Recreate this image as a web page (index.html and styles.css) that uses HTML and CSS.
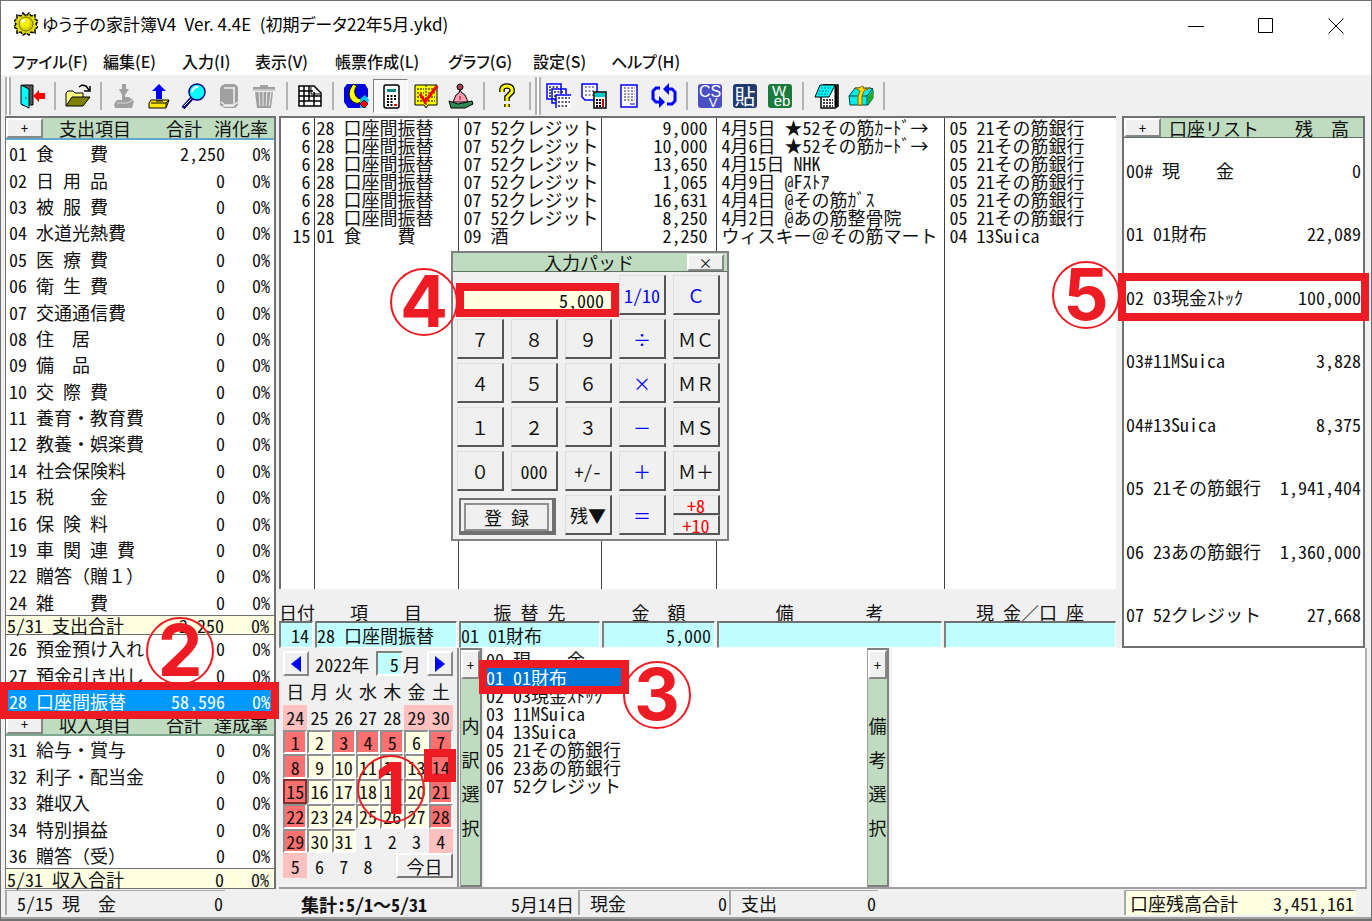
FILE: index.html
```html
<!DOCTYPE html>
<html lang="ja">
<head>
<meta charset="utf-8">
<title>ゆう子の家計簿V4</title>
<link rel="stylesheet" href="styles.css">
</head>
<body>
<div class="window">
  <header class="titlebar">
    <svg class="app-icon" width="24" height="24" viewBox="0 0 24 24" aria-hidden="true">
      <path d="M9 1l3 3 3-3 2 3 4-1v4l3 2-2 3 2 3-3 2v4l-4-1-2 3-3-2-3 2-2-3-4 1v-4l-3-2 2-3-2-3 3-2V3l4 1z" fill="#e8e000" stroke="#000" stroke-width="1.500" stroke-dasharray="4 1"/>
      <circle cx="12" cy="12" r="7" fill="#d8d000" stroke="#6b6500"/>
      <circle cx="11" cy="11" r="5" fill="#f6f000"/><circle cx="9" cy="9" r="2" fill="#fffff0"/>
    </svg>
    <h1 class="title">ゆう子の家計簿V4&ensp;Ver. 4.4E&ensp;(初期データ22年5月.ykd)</h1>
    <div class="win-controls">
      <button aria-label="最小化"><svg width="16" height="16" viewBox="0 0 16 16"><path d="M0 8.5h16" stroke="#000" fill="none"/></svg></button>
      <button aria-label="最大化"><svg width="16" height="16" viewBox="0 0 16 16"><path d="M.5 .5h14v14h-14z" stroke="#000" fill="none"/></svg></button>
      <button aria-label="閉じる"><svg width="16" height="16" viewBox="0 0 16 16"><path d="M.5 .5l15 15M15.500 .5l-15 15" stroke="#000" fill="none"/></svg></button>
    </div>
  </header>
  <nav class="menubar">
    <button>ファイル(F)</button><button>編集(E)</button><button>入力(I)</button><button>表示(V)</button><button>帳票作成(L)</button><button>グラフ(G)</button><button>設定(S)</button><button>ヘルプ(H)</button>
  </nav>
  <div class="toolbar">
    <span class="grip"></span>
    <button aria-label="終了"><svg viewBox="0 0 26 26"><path d="M3 2h11v20H3z" fill="#555" stroke="#000"/><path d="M2 2l8 4v19l-8-4z" fill="#0ff" stroke="#000"/><path d="M7 14v2" stroke="#000"/><path d="M14 13l6-6v3h6v6h-6v3z" fill="#f00"/></svg></button>
    <span class="sep"></span>
    <button aria-label="開く"><svg viewBox="0 0 26 26"><path d="M1 23V10l2-2h5l2 2h8v5" fill="#ffff80" stroke="#000"/><path d="M1 23l6-9h18l-7 9z" fill="#808000" stroke="#000"/><path d="M14 4l3-2 4 1 3 4M25 3v5h-6" fill="none" stroke="#000" stroke-width="1.500"/></svg></button>
    <span class="sep"></span>
    <button aria-label="保存"><svg viewBox="0 0 26 26"><path d="M11 1h4v5h3l-4 6v2h4l5 4-2 7H4l-1-4 3-4h5v-5L8 6h3z" fill="#a0a0a0"/><path d="M6 20h10l6-3" stroke="#d8d8d8" fill="none"/></svg></button>
    <button aria-label="書き出し"><svg viewBox="0 0 26 26"><path d="M13 1l7 7h-4v8h-6V8H6z" fill="#00f"/><path d="M5 17h18l-3 8H3v-5z" fill="#ffe600" stroke="#000"/><path d="M5 20h15l3-3M20 20v4M10 18h7" fill="none" stroke="#000"/></svg></button>
    <button aria-label="検索"><svg viewBox="0 0 26 26"><path d="M2 25l9-10" stroke="#000080" stroke-width="4"/><path d="M3 23l8-8" stroke="#fff"/><circle cx="16" cy="9" r="8" fill="#0ff" stroke="#000080" stroke-width="1.500"/><path d="M11 9q1-5 6-5" stroke="#fff" stroke-width="2" fill="none"/></svg></button>
    <button aria-label="帳簿"><svg viewBox="0 0 26 26"><path d="M5 3l4-2h10l3 3v18l-3 3H8l-4-3V6z" fill="#a0a0a0"/><path d="M5 19l4 3h9l4-3M18 5v16M8 5h11M7 23h11" fill="none" stroke="#eee" stroke-width="1.500"/></svg></button>
    <button aria-label="削除"><svg viewBox="0 0 26 26"><path d="M2 4h7V2h8v2h7v4H2zM4 9h18l-2 16H6z" fill="#a0a0a0"/><path d="M8 9l1 14M12 9v14M16 9l-1 14M20 9l-2 14M2 7h22" stroke="#eee" fill="none"/></svg></button>
    <span class="sep"></span>
    <button aria-label="一覧表"><svg viewBox="0 0 26 26"><path d="M2 3h15l7 7v13H2zM2 8h14M2 13h22M2 18h22M7 3v20M12 3v15M17 9v14" fill="#fff" stroke="#000" stroke-width="1.500"/><path d="M14 4v7h9" fill="none" stroke="#000"/></svg></button>
    <span class="sep"></span>
    <button aria-label="夜間"><svg viewBox="0 0 26 26"><path d="M4 1h18l3 5v8l-6 3 3 8H5l-4-6V5z" fill="#0000e0"/><path d="M10 1q-8 11 0 18 4 3 8 0l2-4q-5 2-7-2-3-6 1-10z" fill="#ff0" stroke="#000"/><path d="M17 16l5-4 4 5-3 8h-6z" fill="#00bfff"/><path d="M21 17l4 4-4 4-4-4z" fill="#f00" stroke="#600"/></svg></button>
    <button class="pressed" aria-label="入力パッド"><svg viewBox="0 0 26 26"><rect x="6" y="2" width="15" height="23" rx="2" fill="#fff" stroke="#000" stroke-width="1.500"/><path d="M9 6h9v3H9z" fill="#088"/><path d="M9 13h9M9 16h9M9 19h6M9 22h6" stroke="#000" stroke-width="2" stroke-dasharray="2 1.500"/><path d="M16 21h3v2h-3z" fill="#f00"/></svg></button>
    <button aria-label="チェック"><svg viewBox="0 0 26 26"><path d="M2 2h22v20h-9l-2 3-2-3H2z" fill="#ff0" stroke="#000"/><path d="M13 2v20M4 6h7M4 10h7M4 14h7M4 18h7M15 6h7M15 10h7M15 14h7M15 18h7" stroke="#000" stroke-dasharray="2 1"/><path d="M7 11l5 8L24 3" fill="none" stroke="#f00" stroke-width="3"/></svg></button>
    <button aria-label="人物"><svg viewBox="0 0 26 26"><circle cx="12" cy="4" r="3" fill="#b04050" stroke="#000"/><path d="M12 7l2 3 3 2 3 7H5l3-7 3-2z" fill="#ff9db5" stroke="#000"/><path d="M1 18l9 3 14-3 1 3-8 4H3z" fill="#2e8b57" stroke="#000"/><path d="M12 13v4" stroke="#a00"/></svg></button>
    <span class="sep"></span>
    <button aria-label="ヘルプ"><svg viewBox="0 0 26 26"><path d="M8 9V6q1-3 5-3t5 3v3l-5 5v4M13 21v3" fill="none" stroke="#000" stroke-width="5.500"/><path d="M8 9V6q1-3 5-3t5 3v3l-5 5v4M13 21v3" fill="none" stroke="#ff0" stroke-width="3"/></svg></button>
    <span class="sep"></span>
    <span class="grip"></span>
    <button aria-label="複数一覧"><svg viewBox="0 0 26 26"><g fill="#fff" stroke="#00f" stroke-width="1.500"><path d="M1 1h14v15H1zM6 6h14v14H6z"/><path d="M10 11h15v14H10z" stroke="none"/><path d="M25 12H10v13"/></g><path d="M3 4h10M3 7h2M3 10h2M3 13h2M8 9h10M8 13h2M8 17h2M12 15h12M12 19h12M12 23h10" stroke="#224" stroke-width="1.500" stroke-dasharray="2 1.500"/></svg></button>
    <button aria-label="一覧と計算"><svg viewBox="0 0 26 26"><path d="M1 1h15v16H4l-3-3z" fill="#fff" stroke="#00f" stroke-width="1.500"/><path d="M4 4h10M4 8h10M4 12h10" stroke="#224" stroke-dasharray="2 1.500"/><path d="M13 9h12v16H13z" fill="#fff" stroke="#000" stroke-width="1.500"/><path d="M14 10h10v4H14z" fill="#0cc"/><path d="M15 17h6M15 20h6M15 23h6" stroke="#000" stroke-width="2" stroke-dasharray="2 1"/><path d="M22 16v8" stroke="#c00" stroke-width="2"/></svg></button>
    <button aria-label="一覧"><svg viewBox="0 0 26 26"><path d="M5 2h16v22H5z" fill="#fff" stroke="#00f" stroke-width="1.500"/><path d="M8 5h11M8 8h11M8 11h11M8 14h11M8 17h11" stroke="#224" stroke-dasharray="2 1.500"/><path d="M14 21h5" stroke="#00f"/></svg></button>
    <button aria-label="更新"><svg viewBox="0 0 26 26"><path d="M9 5H5L2 8v8l3 3h5M16 21h5l3-3V9l-3-3h-5" fill="none" stroke="#00f" stroke-width="3"/><path d="M8 13l6 6-6 6zM18 0l-6 6 6 6z" fill="#00f"/></svg></button>
    <span class="sep"></span>
    <button aria-label="CSV"><svg viewBox="0 0 26 26"><rect x="1" y="1" width="24" height="24" rx="3" fill="#4a4fc4"/><text class="icon-text" x="13" y="14" font-size="16">CS</text><text class="icon-text" x="16" y="24" font-size="13">V</text></svg></button>
    <button aria-label="貼り付け"><svg viewBox="0 0 26 26"><rect x="1" y="1" width="24" height="24" rx="3" fill="#1f3a6e"/><text class="icon-text" x="13" y="21" font-size="21">貼</text></svg></button>
    <button aria-label="Web"><svg viewBox="0 0 26 26"><rect x="1" y="1" width="24" height="24" rx="3" fill="#197a3c"/><text class="icon-text" x="12" y="13" font-size="15">W</text><text class="icon-text" x="15" y="23" font-size="15">eb</text></svg></button>
    <span class="sep"></span>
    <button aria-label="メモ帳"><svg viewBox="0 0 26 26"><path d="M10 2h15v21l-3 2H8V12" fill="#fff" stroke="#000" stroke-width="1.500"/><path d="M23 3v21" stroke="#000" stroke-width="3"/><path d="M7 2h15l-6 12H2z" fill="#0ff" stroke="#000"/><path d="M8 5h10M6 8h10M5 11h10" stroke="#066" stroke-dasharray="2 1"/><path d="M10 17h10M10 20h10M10 23h10" stroke="#000" stroke-width="1.500" stroke-dasharray="2 1"/></svg></button>
    <button aria-label="札束"><svg viewBox="0 0 26 26"><path d="M1 13l6-8h16l2 2v8l-5 7H2z" fill="#0ee" stroke="#044"/><path d="M1 13h18l6-8M19 13v9" fill="none" stroke="#044"/><path d="M7 5h4l4-2 1 3 6-1-6 3-2 5v9h-4v-9l2-5z" fill="#fd0" stroke="#860"/><path d="M20 13l5-6v8l-5 7z" fill="#2a2"/></svg></button>
    <span class="sep"></span>
  </div>

  <main class="workspace">
    <table class="items">
      <thead><tr class="head"><th><button class="plus">+</button><span>支出項目</span></th><th>合計</th><th>消化率</th></tr></thead>
      <tbody>
        <tr><td>01 食　　費</td><td>2,250</td><td>0%</td></tr>
        <tr><td>02 日 用 品</td><td>0</td><td>0%</td></tr>
        <tr><td>03 被 服 費</td><td>0</td><td>0%</td></tr>
        <tr><td>04 水道光熱費</td><td>0</td><td>0%</td></tr>
        <tr><td>05 医 療 費</td><td>0</td><td>0%</td></tr>
        <tr><td>06 衛 生 費</td><td>0</td><td>0%</td></tr>
        <tr><td>07 交通通信費</td><td>0</td><td>0%</td></tr>
        <tr><td>08 住　居</td><td>0</td><td>0%</td></tr>
        <tr><td>09 備　品</td><td>0</td><td>0%</td></tr>
        <tr><td>10 交 際 費</td><td>0</td><td>0%</td></tr>
        <tr><td>11 養育・教育費</td><td>0</td><td>0%</td></tr>
        <tr><td>12 教養・娯楽費</td><td>0</td><td>0%</td></tr>
        <tr><td>14 社会保険料</td><td>0</td><td>0%</td></tr>
        <tr><td>15 税　　金</td><td>0</td><td>0%</td></tr>
        <tr><td>16 保 険 料</td><td>0</td><td>0%</td></tr>
        <tr><td>19 車 関 連 費</td><td>0</td><td>0%</td></tr>
        <tr><td>22 贈答（贈１）</td><td>0</td><td>0%</td></tr>
        <tr><td>24 雑　　費</td><td>0</td><td>0%</td></tr>
        <tr class="total"><td>5/31 支出合計</td><td>2,250</td><td>0%</td></tr>
        <tr><td>26 預金預け入れ</td><td>0</td><td>0%</td></tr>
        <tr><td>27 預金引き出し</td><td>0</td><td>0%</td></tr>
        <tr class="selected"><td>28 口座間振替</td><td>58,596</td><td>0%<span class="mark mark-item"><span class="num">2</span></span></td></tr>
      </tbody>
      <tbody>
        <tr class="head"><th><button class="plus">+</button><span>収入項目</span></th><th>合計</th><th>達成率</th></tr>
        <tr><td>31 給与・賞与</td><td>0</td><td>0%</td></tr>
        <tr><td>32 利子・配当金</td><td>0</td><td>0%</td></tr>
        <tr><td>33 雑収入</td><td>0</td><td>0%</td></tr>
        <tr><td>34 特別損益</td><td>0</td><td>0%</td></tr>
        <tr><td>36 贈答（受）</td><td>0</td><td>0%</td></tr>
        <tr class="total"><td>5/31 収入合計</td><td>0</td><td>0%</td></tr>
      </tbody>
    </table>

    <div class="right">
      <div class="upper">
        <section class="book">
          <div class="ledger-wrap">
            <table class="ledger">
              <colgroup><col class="c-day"><col class="c-item"><col class="c-dest"><col class="c-amount"><col><col class="c-account"></colgroup>
              <tbody>
                <tr><td>6</td><td>28 口座間振替</td><td>07 52クレジット</td><td>9,000</td><td>4月5日 ★52その筋ｶｰﾄﾞ→</td><td>05 21その筋銀行</td></tr>
                <tr><td>6</td><td>28 口座間振替</td><td>07 52クレジット</td><td>10,000</td><td>4月6日 ★52その筋ｶｰﾄﾞ→</td><td>05 21その筋銀行</td></tr>
                <tr><td>6</td><td>28 口座間振替</td><td>07 52クレジット</td><td>13,650</td><td>4月15日 NHK</td><td>05 21その筋銀行</td></tr>
                <tr><td>6</td><td>28 口座間振替</td><td>07 52クレジット</td><td>1,065</td><td>4月9日 @Fｽﾄｱ</td><td>05 21その筋銀行</td></tr>
                <tr><td>6</td><td>28 口座間振替</td><td>07 52クレジット</td><td>16,631</td><td>4月4日 @その筋ｶﾞｽ</td><td>05 21その筋銀行</td></tr>
                <tr><td>6</td><td>28 口座間振替</td><td>07 52クレジット</td><td>8,250</td><td>4月2日 @あの筋整骨院</td><td>05 21その筋銀行</td></tr>
                <tr><td>15</td><td>01 食　　費</td><td>09 酒</td><td>2,250</td><td>ウィスキー＠その筋マート</td><td>04 13Suica</td></tr>
                <tr class="filler"><td></td><td></td><td></td><td></td><td></td><td></td></tr>
              </tbody>
            </table>
            <section class="pad" aria-label="入力パッド">
              <div class="pad-head"><span>入力パッド</span><button aria-label="閉じる">×</button></div>
              <div class="keys">
                <div class="display"><input aria-label="金額" value="5,000"><span class="mark mark-display"><span class="num">4</span></span></div>
                <button class="blue">1/10</button><button class="blue">Ｃ</button>
                <button>７</button><button>８</button><button>９</button><button class="blue">÷</button><button>ＭＣ</button>
                <button>４</button><button>５</button><button>６</button><button class="blue">×</button><button>ＭＲ</button>
                <button>１</button><button>２</button><button>３</button><button class="blue">－</button><button>ＭＳ</button>
                <button>０</button><button>000</button><button>+/-</button><button class="blue">＋</button><button>Ｍ＋</button>
                <button class="enter"><span>登 録</span></button><button>残▼</button><button class="blue">＝</button>
                <div class="plus-keys"><button>+8</button><button>+10</button></div>
              </div>
            </section>
          </div>
          <form class="entry">
            <label><span>日付</span><input class="num-in" value="14"></label>
            <label><span>項　　目</span><input value="28 口座間振替"></label>
            <label><span>振 替 先</span><input value="01 01財布"></label>
            <label><span>金　額</span><input class="num-in" value="5,000"></label>
            <label><span>備　　　　考</span><input value=""></label>
            <label><span>現 金／口 座</span><input value=""></label>
          </form>
        </section>
        <table class="accounts">
          <thead><tr class="head"><th><button class="plus">+</button><span>口座リスト</span></th><th>残　高</th></tr></thead>
          <tbody>
            <tr><td>00# 現　　金</td><td>0</td></tr>
            <tr><td>01 01財布</td><td>22,089</td></tr>
            <tr><td>02 03現金ｽﾄｯｸ</td><td>100,000<span class="mark mark-account"><span class="num">5</span></span></td></tr>
            <tr><td>03#11MSuica</td><td>3,828</td></tr>
            <tr><td>04#13Suica</td><td>8,375</td></tr>
            <tr><td>05 21その筋銀行</td><td>1,941,404</td></tr>
            <tr><td>06 23あの筋銀行</td><td>1,360,000</td></tr>
            <tr><td>07 52クレジット</td><td>27,668</td></tr>
          </tbody>
        </table>
      </div>

      <div class="lower">
        <section class="calendar">
          <div class="month">
            <button aria-label="前月"><svg width="10" height="16" viewBox="0 0 10 16"><path d="M10 0v16L0 8z" fill="#00f"/></svg></button>
            <span class="year">2022年</span>
            <label><input value="5">月</label>
            <button aria-label="翌月"><svg width="10" height="16" viewBox="0 0 10 16"><path d="M0 0v16l10-8z" fill="#00f"/></svg></button>
          </div>
          <div class="weekdays"><span>日</span><span>月</span><span>火</span><span>水</span><span>木</span><span>金</span><span>土</span></div>
          <div class="days">
            <button class="off">24</button><button>25</button><button>26</button><button>27</button><button>28</button><button class="off">29</button><button class="off">30</button>
            <button class="hol">1</button><button class="day">2</button><button class="hol">3</button><button class="hol">4</button><button class="hol">5</button><button class="day">6</button><button class="hol">7</button>
            <button class="hol">8</button><button class="day">9</button><button class="day">10</button><button class="day">11</button><button class="day">12</button><button class="day">13</button><button class="hol">14<span class="mark mark-day"><span class="num">1</span></span></button>
            <button class="hol today">15</button><button class="day">16</button><button class="day">17</button><button class="day">18</button><button class="day">19</button><button class="day">20</button><button class="hol">21</button>
            <button class="hol">22</button><button class="day">23</button><button class="day">24</button><button class="day">25</button><button class="day">26</button><button class="day">27</button><button class="hol">28</button>
            <button class="hol">29</button><button class="day">30</button><button class="day">31</button><button>1</button><button>2</button><button>3</button><button class="off">4</button>
            <button class="off">5</button><button>6</button><button>7</button><button>8</button><button class="go-today">今日</button>
          </div>
        </section>
        <div class="side"><button class="plus">+</button><span>内</span><span>訳</span><span>選</span><span>択</span></div>
        <ul class="choices" role="listbox" aria-label="内訳選択">
          <li role="option">00 現　　金</li>
          <li role="option" aria-selected="true">01 01財布<span class="mark mark-choice"><span class="num">3</span></span></li>
          <li role="option">02 03現金ｽﾄｯｸ</li>
          <li role="option">03 11MSuica</li>
          <li role="option">04 13Suica</li>
          <li role="option">05 21その筋銀行</li>
          <li role="option">06 23あの筋銀行</li>
          <li role="option">07 52クレジット</li>
        </ul>
        <div class="side"><button class="plus">+</button><span>備</span><span>考</span><span>選</span><span>択</span></div>
        <div class="notes"></div>
      </div>
    </div>
  </main>

  <footer class="status">
    <div class="cell"><span>5/15 現　金</span><span>0</span></div>
    <div class="period"><b>集計:5/1～5/31</b><strong>5月14日</strong></div>
    <div class="cell"><span>現金</span><span>0</span></div>
    <div class="cell"><span>支出</span><span>0</span></div>
    <div class="cell sum"><span>口座残高合計</span><span>3,451,161</span></div>
  </footer>
</div>
</body>
</html>
```

FILE: styles.css
```css
* { box-sizing: border-box; }
body {
  margin: 0;
  color: #111;
  background: #f0f0f0;
  font: 18px/18px "Noto Sans Mono CJK JP", "Noto Sans CJK JP", monospace;
}
button, input {
  font: inherit;
  color: inherit;
  margin: 0;
  padding: 0;
  border: 0;
  border-radius: 0;
  background: none;
  min-width: 0;
}
.window {
  min-height: 100vh;
  display: flex;
  flex-direction: column;
  border: 1px solid #707070;
  border-bottom-width: 2px;
}

/* title and menus */
.titlebar {
  display: flex;
  align-items: center;
  height: 46px;
  padding-left: 13px;
  background: #fff;
}
.title {
  flex: 1;
  margin: 0 0 0 4px;
  font: 17px/24px "Noto Sans CJK JP", sans-serif;
  font-feature-settings: "palt";
  color: #000;
  white-space: pre;
}
.win-controls { display: flex; }
.win-controls button { width: 70px; height: 46px; }
.win-controls svg { vertical-align: middle; }
.menubar {
  display: grid;
  grid-template-columns: 91px 79px 73px 80px 113px 85px 78px 80px;
  height: 28px;
  padding-left: 11px;
  background: #fff;
}
.menubar button {
  text-align: left;
  font: 500 16px/28px "Noto Sans CJK JP", sans-serif;
  font-feature-settings: "palt";
  white-space: nowrap;
}
.toolbar {
  display: flex;
  align-items: center;
  height: 41px;
  padding-left: 4px;
}
.toolbar button {
  width: 35px;
  height: 34px;
  flex: none;
  display: grid;
  place-items: center;
}
.toolbar svg { width: 26px; height: 26px; overflow: visible; }
.toolbar .pressed {
  border: 1px solid #fff;
  border-top-color: #808080;
  border-left-color: #808080;
  background: #f8f8f8;
}
.sep { width: 11px; height: 28px; flex: none; }
.sep::before { content: ""; display: block; width: 2px; height: 100%; margin: auto; background: #b4b4b4; }
.grip {
  width: 6px;
  height: 38px;
  margin-right: 3px;
  border: solid #b0b0b0;
  border-width: 0 2px;
  background: #fff;
}
.sep + .grip { margin-right: 0; }
.icon-text { fill: #fff; text-anchor: middle; font-family: "Liberation Sans", "Noto Sans CJK JP", sans-serif; }

/* shared pieces */
.workspace { flex: 1; display: flex; gap: 3px; padding: 0 4px; }
table { border-collapse: collapse; border-spacing: 0; }
td, th { padding: 0; font-weight: 400; white-space: pre; }
.plus {
  background: #f0f0f0;
  border: 2px solid #fff;
  border-right-color: #888;
  border-bottom-color: #888;
  text-align: center;
  font-size: 14px;
}
.head { background: #c0dcc0; }

/* item list */
.items {
  width: 271px;
  flex: none;
  display: flex;
  flex-direction: column;
  border: 2px solid #707070;
  border-width: 2px 2px 1px 1px;
  background: #fff;
}
.items thead, .items tbody { display: contents; }
.items tr {
  flex: 1 1 26px;
  display: grid;
  grid-template-columns: 1fr 70px 45px;
  align-items: center;
  padding: 0 4px 0 3px;
  position: relative;
}
.items td + td, .items th + th { text-align: right; }
.items .head {
  flex: 0 0 22px;
  padding: 0 6px 0 0;
  grid-template-columns: 1fr 60px 66px;
  border-bottom: 2px solid #80a890;
}
.items thead .head { border-bottom-color: #60a8c8; }
.items .head th:first-child, .accounts .head th:first-child {
  display: flex;
  align-items: center;
  text-align: left;
}
.items .plus { width: 37px; height: 20px; line-height: 14px; margin-right: 16px; }
.items .total {
  flex: 0 0 20px;
  padding: 0 5px 0 1px;
  background: #ffffe1;
  border: 1px solid #707070;
  border-width: 1px 0;
}
.items .total:last-child { border-bottom: 0; }
.items .selected { background: #0099ff; color: #fff; }

/* ledger */
.right { flex: 1; min-width: 0; display: flex; flex-direction: column; }
.upper { flex: 1; display: flex; gap: 6px; padding-right: 2px; }
.book { flex: 1; min-width: 0; display: flex; flex-direction: column; }
.ledger-wrap {
  flex: 1;
  display: flex;
  position: relative;
  background: #fff;
  border-top: 2px solid #707070;
  border-left: 2px solid #707070;
}
.ledger { width: 100%; table-layout: fixed; }
.c-day { width: 33px; }
.c-item { width: 144px; }
.c-dest { width: 143px; }
.c-amount { width: 115px; }
.c-account { width: 172px; }
.ledger td { height: 18px; padding: 0 5px; border-left: 1px solid #404040; }
.ledger td:first-child { border-left: 0; padding: 0 3px 0 0; text-align: right; }
.ledger td:nth-child(2) { padding: 0 2px; }
.ledger td:nth-child(4) { padding-right: 8px; text-align: right; }
.ledger .filler td { height: auto; }
.entry {
  display: grid;
  grid-template-columns: 34px 142px 141px 113px 1fr 172px;
  gap: 2px;
  padding-top: 14px;
}
.entry label { display: flex; flex-direction: column; min-width: 0; text-align: center; white-space: pre; }
.entry span { height: 18px; }
.entry input {
  width: 100%;
  height: 27px;
  padding: 0;
  line-height: 24px;
  background: #c0ffff;
  border: 1px solid #fff;
  border-top: 2px solid #707070;
  border-left: 2px solid #808080;
}
.entry .num-in { padding-right: 3px; text-align: right; }

/* input pad */
.pad {
  position: absolute;
  left: 170px;
  top: 133px;
  width: 278px;
  border: 2px solid #808080;
  background: #f0f0f0;
}
.pad-head {
  display: flex;
  justify-content: flex-end;
  align-items: center;
  height: 19px;
  background: #c0dcc0;
  border-bottom: 1px solid #607060;
}
.pad-head span { flex: 1; padding-left: 38px; text-align: center; }
.pad-head button {
  width: 37px;
  height: 17px;
  margin-right: 3px;
  font-size: 14px;
  line-height: 12px;
  background: #f0f0f0;
  border: 2px solid #fff;
  border-right-color: #888;
  border-bottom-color: #888;
}
.keys {
  display: grid;
  grid-template-columns: repeat(5, 47px);
  grid-auto-rows: 40px;
  gap: 4px 7px;
  padding: 3px 4px 4px;
}
.keys button {
  background: #f0f0f0;
  border: 1px solid #ddd;
  border-right: 2px solid #555;
  border-bottom: 2px solid #555;
  white-space: pre;
}
.keys .blue { color: #0000ff; }
.display { grid-column: span 3; position: relative; align-self: end; margin-bottom: 4px; }
.display input { width: 100%; height: 22px; padding-right: 8px; line-height: 22px; background: #ffffe1; text-align: right; display: block; }
.keys .enter { grid-column: span 2; margin: 3px 2px 0; padding: 3px; border: 2px solid #707070; border-right-width: 4px; border-bottom-width: 4px; }
.enter span { display: block; line-height: 24px; border: 2px solid #909090; }
.plus-keys { display: grid; grid-template-rows: 1fr 1fr; }
.plus-keys button { color: #f00; line-height: 16px; }

/* accounts */
.accounts {
  width: 243px;
  flex: none;
  display: flex;
  flex-direction: column;
  border: 2px solid #707070;
  background: #fff;
}
.accounts thead, .accounts tbody { display: contents; }
.accounts tr {
  flex: 1 1 60px;
  display: grid;
  grid-template-columns: 1fr auto;
  align-items: center;
  padding: 0 2px;
  position: relative;
}
.accounts .head { flex: 0 0 20px; padding: 0 14px 0 0; border-bottom: 1px solid #607060; }
.accounts .plus { width: 37px; height: 19px; line-height: 14px; margin-right: 8px; }

/* lower area */
.lower { display: flex; height: 241px; border-bottom: 2px solid #a0a0a0; }
.calendar {
  width: 180px;
  flex: none;
  display: flex;
  flex-direction: column;
  padding: 3px 4px 9px;
  border-right: 2px solid #909090;
}
.month { display: flex; align-items: center; justify-content: space-between; height: 25px; }
.month button {
  width: 26px;
  height: 25px;
  display: grid;
  place-items: center;
  background: #f0f0f0;
  border: 2px solid #fff;
  border-right-color: #888;
  border-bottom-color: #888;
}
.month label { display: flex; align-items: center; }
.month input {
  width: 27px;
  height: 25px;
  padding-right: 2px;
  text-align: right;
  background: #c0ffff;
  border: 2px solid #808080;
  border-right-color: #fff;
  border-bottom-color: #fff;
}
.weekdays, .days { display: grid; grid-template-columns: repeat(7, 1fr); text-align: center; }
.weekdays { padding: 6px 0 5px; }
.days { flex: 1; grid-auto-rows: 1fr; font-weight: 500; }
.days button { border: 1px solid transparent; position: relative; }
.days .off { background: #ffc0c0; }
.days .hol, .days .day { border: 2px solid #909090; border-right-color: #fff; border-bottom-color: #fff; }
.days .hol { background: #ff7070; }
.days .day { background: #ffffe1; }
.days .today { border-color: #803030; }
.days .go-today {
  grid-column: span 3;
  margin-left: 16px;
  background: #f0f0f0;
  border: 2px solid #fff;
  border-right-color: #777;
  border-bottom-color: #777;
  font-weight: 400;
}
.side {
  width: 22px;
  flex: none;
  display: flex;
  flex-direction: column;
  align-items: center;
  gap: 16px;
  background: #c0dcc0;
  border: 2px solid #808080;
  border-left: 1px solid #a0a0a0;
}
.side .plus { width: 100%; height: 29px; margin-bottom: 21px; }
.calendar + .side { margin: 0 2px 0 1px; }
.choices {
  flex: 0 1 383px;
  margin: 0;
  padding: 2px 2px;
  list-style: none;
  background: #fff;
}
.choices li { width: 136px; position: relative; white-space: pre; }
.choices [aria-selected="true"] { background: #0078d7; color: #fff; }
.notes { flex: 1; margin-left: 3px; background: #fff; border-right: 2px solid #b0b0b0; }

/* status bar */
.status {
  display: grid;
  grid-template-columns: 220px 353px 151px 149px 1fr;
  height: 30px;
  padding: 1px 15px 2px 4px;
  border-bottom: 2px solid #a0a0a0;
  white-space: pre;
}
.status > div { display: flex; align-items: center; justify-content: space-between; }
.status .cell { padding: 0 2px 0 10px; border-left: 2px solid #a8a8a8; border-top: 1px solid #a8a8a8; }
.status .period { padding: 3px 4px 0 76px; }
.status strong { font-weight: 500; }
.status .sum { width: 232px; justify-self: end; padding: 0 2px 0 4px; background: #ffffe1; }

/* callouts */
.mark { position: absolute; z-index: 5; border: 8px solid #ed1c24; pointer-events: none; }
.num {
  position: absolute;
  width: 68px;
  height: 68px;
  border: 2px solid #ed1c24;
  border-radius: 50%;
  color: #ed1c24;
  font: 700 71px/62px Inter, "Liberation Sans", sans-serif;
  text-align: center;
}
.mark-item { inset: -6px -5px -5px -6px; }
.mark-item .num { left: 138px; top: -73px; }
.mark-choice { inset: -8px -7px; }
.mark-choice .num { left: 136px; top: -7px; }
.mark-display { inset: -6px -7px -6px -1px; }
.mark-display .num { left: -74px; top: -23px; }
.mark-account { inset: 8px -6px; }
.mark-account .num { left: -74px; top: -20px; }
.mark-day { inset: -7px -5px -5px -7px; }
.mark-day .num { left: -75px; top: -2px; }
```
